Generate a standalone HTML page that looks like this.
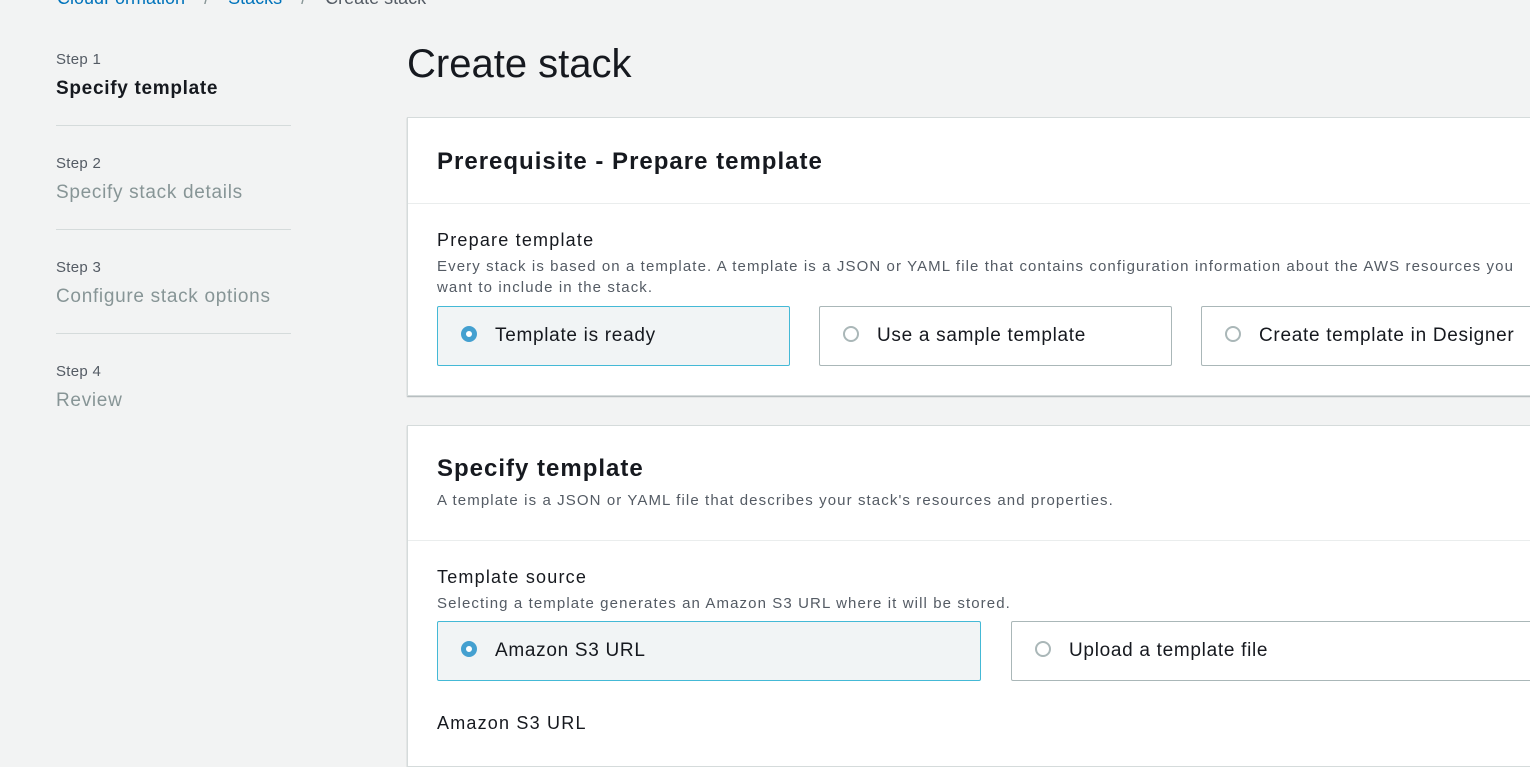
<!DOCTYPE html>
<html><head><style>
body{margin:0;width:1530px;height:732px;overflow:hidden;background:#f2f3f3;font-family:"Liberation Sans",sans-serif;color:#16191f;position:relative}
.a{position:absolute;white-space:nowrap}
.step{font-size:15px;color:#545b64;letter-spacing:.3px}
.sl{font-size:19px;color:#879596;letter-spacing:.7px}
.hr{position:absolute;left:56px;width:235px;height:1px;background:#d5dbdb}
.card{position:absolute;left:407px;width:1140px;background:#fff;border:1px solid #d5dbdb;box-shadow:0 1px 1px rgba(0,28,36,.3)}
.tile{position:absolute;height:58px;border:1px solid #aab7b8;border-radius:2px;background:#fff;font-size:19px;letter-spacing:.7px}
.tile.sel{border-color:#44b9d6;background:#f1f4f5}
.tile span{position:absolute;left:57px;top:18px}
.r{position:absolute;left:23px;top:19px;width:16px;height:16px;border:2px solid #aab7b8;border-radius:50%;box-sizing:border-box;background:#fff}
.sel .r{border:5px solid #44a0d0}
.lbl{font-size:18px;letter-spacing:1.2px}
.desc{font-size:15px;color:#545b64;letter-spacing:1.1px}
h2{margin:0;font-size:24px;font-weight:bold;letter-spacing:1px}
</style></head><body>
<div class="a" style="left:57px;top:-12px;font-size:18px;color:#0073bb">CloudFormation <span style="color:#879596;margin:0 14px">/</span> Stacks <span style="color:#879596;margin:0 14px">/</span> <span style="color:#545b64">Create stack</span></div>
<div class="a step" style="left:56px;top:51px">Step 1</div>
<div class="a" style="left:56px;top:78px;font-size:19px;font-weight:bold;letter-spacing:.7px">Specify template</div>
<div class="hr" style="top:125px"></div>
<div class="a step" style="left:56px;top:155px">Step 2</div>
<div class="a sl" style="left:56px;top:182px">Specify stack details</div>
<div class="hr" style="top:229px"></div>
<div class="a step" style="left:56px;top:259px">Step 3</div>
<div class="a sl" style="left:56px;top:286px">Configure stack options</div>
<div class="hr" style="top:333px"></div>
<div class="a step" style="left:56px;top:363px">Step 4</div>
<div class="a sl" style="left:56px;top:390px">Review</div>
<div class="a" style="left:407px;top:42px;font-size:40px">Create stack</div>

<div class="card" style="top:117px;height:277px">
 <h2 class="a" style="left:29px;top:30px">Prerequisite - Prepare template</h2>
 <div style="position:absolute;left:0;right:0;top:85px;height:1px;background:#eaeded"></div>
 <div class="a lbl" style="left:29px;top:112px">Prepare template</div>
 <div class="a desc" style="left:29px;top:140px">Every stack is based on a template. A template is a JSON or YAML file that contains configuration information about the AWS resources you</div>
 <div class="a desc" style="left:29px;top:161px">want to include in the stack.</div>
 <div class="tile sel" style="left:29px;top:188px;width:351px"><div class="r"></div><span>Template is ready</span></div>
 <div class="tile" style="left:411px;top:188px;width:351px"><div class="r"></div><span>Use a sample template</span></div>
 <div class="tile" style="left:793px;top:188px;width:351px"><div class="r"></div><span>Create template in Designer</span></div>
</div>

<div class="card" style="top:425px;height:340px">
 <h2 class="a" style="left:29px;top:29px">Specify template</h2>
 <div class="a desc" style="left:29px;top:66px">A template is a JSON or YAML file that describes your stack's resources and properties.</div>
 <div style="position:absolute;left:0;right:0;top:114px;height:1px;background:#eaeded"></div>
 <div class="a lbl" style="left:29px;top:141px">Template source</div>
 <div class="a desc" style="left:29px;top:169px">Selecting a template generates an Amazon S3 URL where it will be stored.</div>
 <div class="tile sel" style="left:29px;top:195px;width:542px"><div class="r"></div><span>Amazon S3 URL</span></div>
 <div class="tile" style="left:603px;top:195px;width:542px"><div class="r"></div><span>Upload a template file</span></div>
 <div class="a lbl" style="left:29px;top:287px">Amazon S3 URL</div>
</div>
</body></html>
